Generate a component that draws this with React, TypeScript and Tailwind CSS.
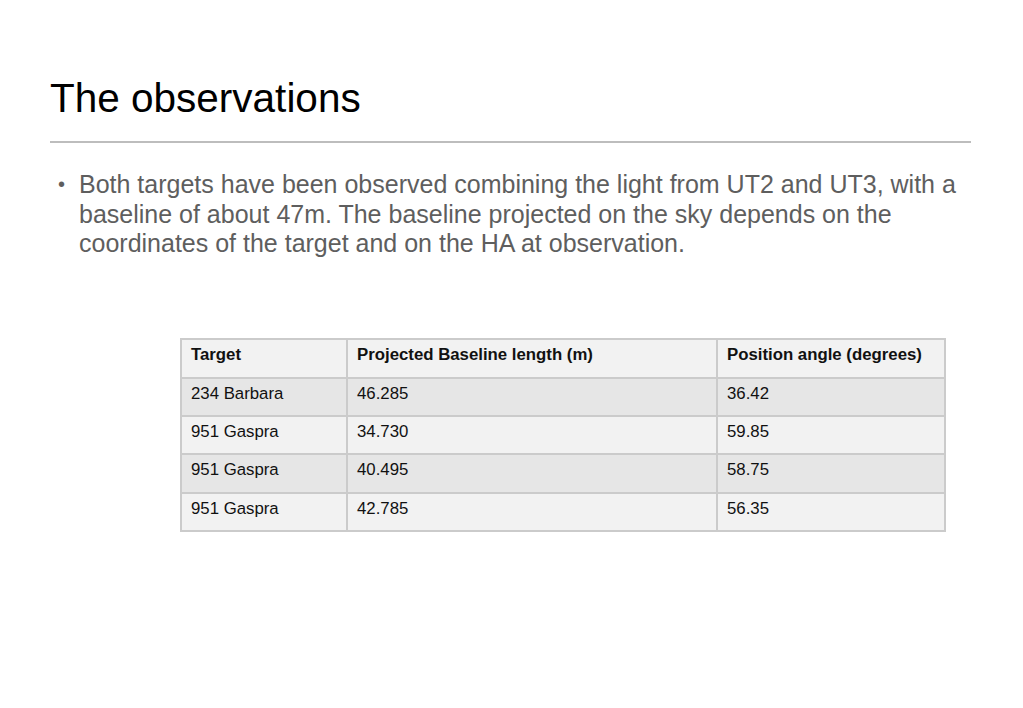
import React from 'react'

const rows = [
  ['234 Barbara', '46.285', '36.42'],
  ['951 Gaspra', '34.730', '59.85'],
  ['951 Gaspra', '40.495', '58.75'],
  ['951 Gaspra', '42.785', '56.35'],
]

export default function App() {
  return (
    <div className="w-[1023px] h-[708px] bg-white font-['Liberation_Sans',Arial,sans-serif] overflow-hidden">
      {/* Title */}
      <div className="pt-[78px] pl-[50px] pr-[52px]">
        <h1 className="text-[40.5px] leading-[41px] text-black">The observations</h1>
        <div className="mt-[22px] h-[2px] bg-[#bdbdbd]" />
      </div>

      {/* Bullet */}
      <div className="mt-[27px] pl-[58px] pr-[40px] flex text-[#5e5e5e] text-[25px] leading-[29.7px]">
        <span className="w-[21px] shrink-0 text-[20px]">•</span>
        <p>
          Both targets have been observed combining the light from UT2 and UT3, with a baseline of about 47m. The
          baseline projected on the sky depends on the coordinates of the target and on the HA at observation.
        </p>
      </div>

      {/* Table */}
      <div className="mt-[79px] pl-[180px]">
        <table className="border-collapse text-[16.8px] text-[#111]">
          <colgroup>
            <col className="w-[166px]" />
            <col className="w-[370px]" />
            <col className="w-[228px]" />
          </colgroup>
          <thead>
            <tr className="h-[38.4px] bg-[#f2f2f2]">
              <th className="border-2 border-[#cbcbcb] px-[9px] pt-[2px] align-top text-left font-bold">Target</th>
              <th className="border-2 border-[#cbcbcb] px-[9px] pt-[2px] align-top text-left font-bold">Projected Baseline length (m)</th>
              <th className="border-2 border-[#cbcbcb] px-[9px] pt-[2px] align-top text-left font-bold">Position angle (degrees)</th>
            </tr>
          </thead>
          <tbody>
            {rows.map((r, i) => (
              <tr key={i} className={`h-[38.4px] ${i % 2 === 0 ? 'bg-[#e6e6e6]' : 'bg-[#f2f2f2]'}`}>
                {r.map((c, j) => (
                  <td key={j} className="border-2 border-[#cbcbcb] px-[9px] pt-[2px] align-top font-normal">{c}</td>
                ))}
              </tr>
            ))}
          </tbody>
        </table>
      </div>
    </div>
  )
}
